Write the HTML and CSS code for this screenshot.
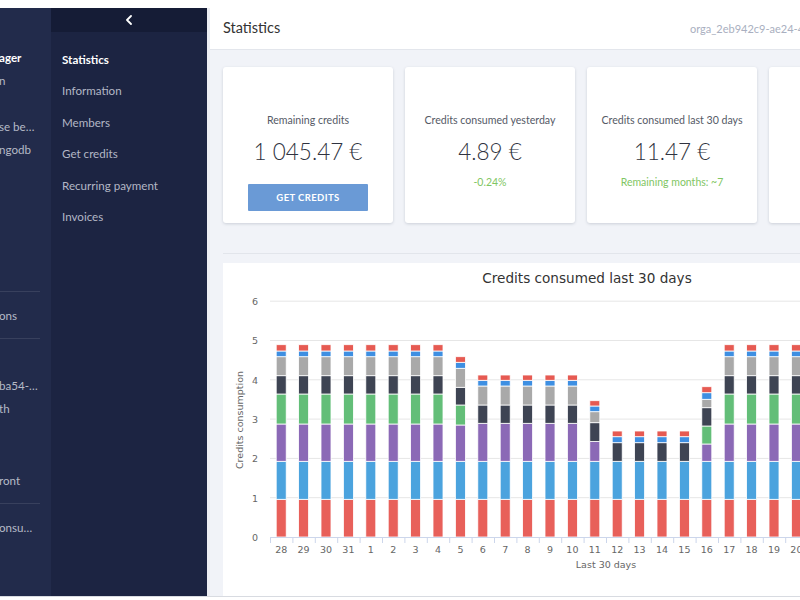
FILE: index.html
```html
<!DOCTYPE html>
<html lang="en">
<head>
<meta charset="utf-8">
<title>Statistics</title>
<link rel="stylesheet" href="styles.css">
</head>
<body>
<div class="frame">
  <aside class="side1">
    <div class="s1-group s1-first">
      <div class="s1-item s1-active">ager</div>
      <div class="s1-item">n</div>
      <div class="s1-item s1-gap">se be…</div>
      <div class="s1-item">ngodb</div>
    </div>
    <div class="s1-group s1-mid">
      <div class="s1-item">ons</div>
    </div>
    <div class="s1-group s1-apps">
      <div class="s1-item">ba54-…</div>
      <div class="s1-item">th</div>
      <div class="s1-item s1-gap2">ront</div>
    </div>
    <div class="s1-group s1-last">
      <div class="s1-item">onsu…</div>
    </div>
  </aside>

  <aside class="side2">
    <div class="side2-head">
      <svg class="chev" width="8" height="10" viewBox="0 0 8 10"><path d="M6 1 L2 5 L6 9" fill="none" stroke="#fff" stroke-width="1.8" stroke-linecap="round" stroke-linejoin="round"/></svg>
    </div>
    <nav class="side2-nav">
      <a class="s2-item s2-active">Statistics</a>
      <a class="s2-item">Information</a>
      <a class="s2-item">Members</a>
      <a class="s2-item">Get credits</a>
      <a class="s2-item">Recurring payment</a>
      <a class="s2-item">Invoices</a>
    </nav>
  </aside>

  <main class="main">
    <header class="topbar">
      <h1 class="topbar-title">Statistics</h1>
      <span class="org-id">orga_2eb942c9-ae24-4</span>
    </header>
    <div class="content">
      <div class="cards">
        <div class="card">
          <div class="card-label">Remaining credits</div>
          <div class="card-value">1 045.47 €</div>
          <button class="btn">GET CREDITS</button>
        </div>
        <div class="card">
          <div class="card-label">Credits consumed yesterday</div>
          <div class="card-value">4.89 €</div>
          <div class="card-note">-0.24%</div>
        </div>
        <div class="card">
          <div class="card-label">Credits consumed last 30 days</div>
          <div class="card-value">11.47 €</div>
          <div class="card-note">Remaining months: ~7</div>
        </div>
        <div class="card"></div>
      </div>
      <div class="section">
        <div class="chart-card">
          <svg class="chart" width="740" height="334" viewBox="0 0 740 334">
            <defs>
              <g id="barA" class="bar">
                <rect width="10" y="236.3" height="37.7" class="k-red"/>
                <rect width="10" y="198.3" height="38" class="k-blue"/>
                <rect width="10" y="161" height="37.3" class="k-purple"/>
                <rect width="10" y="131" height="30" class="k-green"/>
                <rect width="10" y="112.7" height="18.3" class="k-dark"/>
                <rect width="10" y="93.7" height="19" class="k-gray"/>
                <rect width="10" y="88" height="5.7" class="k-blue2"/>
                <rect width="10" y="81.7" height="6.3" class="k-red2"/>
              </g>
              <g id="barF" class="bar">
                <rect width="10" y="236.3" height="37.7" class="k-red"/>
                <rect width="10" y="198.3" height="38" class="k-blue"/>
                <rect width="10" y="162" height="36.3" class="k-purple"/>
                <rect width="10" y="142" height="20" class="k-green"/>
                <rect width="10" y="124.3" height="17.7" class="k-dark"/>
                <rect width="10" y="105.3" height="19" class="k-gray"/>
                <rect width="10" y="99.3" height="6" class="k-blue2"/>
                <rect width="10" y="93.7" height="5.6" class="k-red2"/>
              </g>
              <g id="barB" class="bar">
                <rect width="10" y="236.3" height="37.7" class="k-red"/>
                <rect width="10" y="198.3" height="38" class="k-blue"/>
                <rect width="10" y="160.3" height="38" class="k-purple"/>
                <rect width="10" y="142" height="18.3" class="k-dark"/>
                <rect width="10" y="123" height="19" class="k-gray"/>
                <rect width="10" y="117.3" height="5.7" class="k-blue2"/>
                <rect width="10" y="112" height="5.3" class="k-red2"/>
              </g>
              <g id="barD" class="bar">
                <rect width="10" y="236.3" height="37.7" class="k-red"/>
                <rect width="10" y="198.3" height="38" class="k-blue"/>
                <rect width="10" y="178.5" height="19.8" class="k-purple"/>
                <rect width="10" y="159.7" height="18.8" class="k-dark"/>
                <rect width="10" y="148.7" height="11" class="k-gray"/>
                <rect width="10" y="143" height="5.7" class="k-blue2"/>
                <rect width="10" y="137.7" height="5.3" class="k-red2"/>
              </g>
              <g id="barC" class="bar">
                <rect width="10" y="236.3" height="37.7" class="k-red"/>
                <rect width="10" y="198.3" height="38" class="k-blue"/>
                <rect width="10" y="179.7" height="18.6" class="k-dark"/>
                <rect width="10" y="173.7" height="6" class="k-blue2"/>
                <rect width="10" y="168" height="5.7" class="k-red2"/>
              </g>
              <g id="barE" class="bar">
                <rect width="10" y="236.3" height="37.7" class="k-red"/>
                <rect width="10" y="198.3" height="38" class="k-blue"/>
                <rect width="10" y="181" height="17.3" class="k-purple"/>
                <rect width="10" y="163" height="18" class="k-green"/>
                <rect width="10" y="144.7" height="18.3" class="k-dark"/>
                <rect width="10" y="136.3" height="8.4" class="k-gray"/>
                <rect width="10" y="129.7" height="6.6" class="k-blue2"/>
                <rect width="10" y="123.7" height="6" class="k-red2"/>
              </g>
            </defs>
            <text class="ch-title" x="364" y="20" text-anchor="middle">Credits consumed last 30 days</text>
            <g class="grid">
              <line x1="47" x2="740" y1="38.2" y2="38.2"/>
              <line x1="47" x2="740" y1="77.5" y2="77.5"/>
              <line x1="47" x2="740" y1="116.8" y2="116.8"/>
              <line x1="47" x2="740" y1="156.1" y2="156.1"/>
              <line x1="47" x2="740" y1="195.4" y2="195.4"/>
              <line x1="47" x2="740" y1="234.7" y2="234.7"/>
            </g>
            <g class="ylab" text-anchor="end">
              <text x="35" y="42">6</text>
              <text x="35" y="81.3">5</text>
              <text x="35" y="120.6">4</text>
              <text x="35" y="159.9">3</text>
              <text x="35" y="199.2">2</text>
              <text x="35" y="238.5">1</text>
              <text x="35" y="277.8">0</text>
            </g>
            <text class="axtitle" transform="translate(20 157) rotate(-90)" text-anchor="middle">Credits consumption</text>
            <use href="#barA" x="53.2"/>
            <use href="#barA" x="75.6"/>
            <use href="#barA" x="98"/>
            <use href="#barA" x="120.4"/>
            <use href="#barA" x="142.8"/>
            <use href="#barA" x="165.2"/>
            <use href="#barA" x="187.6"/>
            <use href="#barA" x="210"/>
            <use href="#barF" x="232.4"/>
            <use href="#barB" x="254.8"/>
            <use href="#barB" x="277.2"/>
            <use href="#barB" x="299.6"/>
            <use href="#barB" x="322"/>
            <use href="#barB" x="344.4"/>
            <use href="#barD" x="366.8"/>
            <use href="#barC" x="389.2"/>
            <use href="#barC" x="411.6"/>
            <use href="#barC" x="434"/>
            <use href="#barC" x="456.4"/>
            <use href="#barE" x="478.8"/>
            <use href="#barA" x="501.2"/>
            <use href="#barA" x="523.6"/>
            <use href="#barA" x="546"/>
            <use href="#barA" x="568.4"/>
            <line class="xaxis" x1="47" x2="740" y1="274.5" y2="274.5"/>
            <path class="ticks" d="M47.5 274v6M69.9 274v6M92.3 274v6M114.7 274v6M137.1 274v6M159.5 274v6M181.9 274v6M204.3 274v6M226.7 274v6M249.1 274v6M271.5 274v6M293.9 274v6M316.3 274v6M338.7 274v6M361.1 274v6M383.5 274v6M405.9 274v6M428.3 274v6M450.7 274v6M473.1 274v6M495.5 274v6M517.9 274v6M540.3 274v6M562.7 274v6M585.1 274v6"/>
            <g class="xlab" text-anchor="middle">
              <text x="58.2" y="290">28</text>
              <text x="80.6" y="290">29</text>
              <text x="103" y="290">30</text>
              <text x="125.4" y="290">31</text>
              <text x="147.8" y="290">1</text>
              <text x="170.2" y="290">2</text>
              <text x="192.6" y="290">3</text>
              <text x="215" y="290">4</text>
              <text x="237.4" y="290">5</text>
              <text x="259.8" y="290">6</text>
              <text x="282.2" y="290">7</text>
              <text x="304.6" y="290">8</text>
              <text x="327" y="290">9</text>
              <text x="349.4" y="290">10</text>
              <text x="371.8" y="290">11</text>
              <text x="394.2" y="290">12</text>
              <text x="416.6" y="290">13</text>
              <text x="439" y="290">14</text>
              <text x="461.4" y="290">15</text>
              <text x="483.8" y="290">16</text>
              <text x="506.2" y="290">17</text>
              <text x="528.6" y="290">18</text>
              <text x="551" y="290">19</text>
              <text x="573.4" y="290">20</text>
            </g>
            <text class="axtitle" x="383" y="305" text-anchor="middle">Last 30 days</text>
          </svg>
        </div>
      </div>
    </div>
  </main>
</div>
</body>
</html>
```

FILE: styles.css
```css
* { box-sizing: border-box; margin: 0; padding: 0; }

html, body {
  width: 800px;
  height: 600px;
  overflow: hidden;
  background: #ffffff;
}

body {
  font-family: Lato, "Liberation Sans", Arial, sans-serif;
  color: #333;
}

.frame {
  margin-top: 8px;
  height: 589px;
  display: flex;
  overflow: hidden;
  border-bottom: 1px solid #d8dbe1;
}

/* first sidebar (scrolled, only its right edge is visible) */
.side1 {
  width: 51px;
  flex: none;
  background: #222b4b;
  overflow: hidden;
  white-space: nowrap;
  font-size: 11.6px;
  color: #b6bac7;
}

.s1-group {
  margin-right: 11px;
  border-bottom: 1px solid rgba(255, 255, 255, 0.1);
  padding: 11.5px 0;
}

.s1-first { height: 284px; padding-top: 37.5px; }
.s1-apps { padding-top: 34.5px; }
.s1-last { border-bottom: 0; }

.s1-item {
  height: 23px;
  line-height: 23px;
  margin-left: -1px;
}

.s1-active { color: #fff; font-weight: 700; }
.s1-gap { margin-top: 23px; }
.s1-gap2 { margin-top: 49px; }

/* second sidebar */
.side2 {
  width: 156px;
  flex: none;
  background: #1c2442;
}

.side2-head {
  height: 24px;
  background: #151c36;
  display: flex;
  align-items: center;
  justify-content: center;
}

.chev { display: block; margin-top: -1px; }

.side2-nav {
  display: flex;
  flex-direction: column;
  padding-top: 12px;
}

.s2-item {
  display: block;
  padding-left: 11px;
  height: 31.4px;
  line-height: 31.4px;
  font-size: 11.6px;
  color: #b3b7c5;
  white-space: nowrap;
}

.s2-active { color: #fff; font-weight: 700; }

/* main area */
.main {
  flex: 1;
  min-width: 0;
  background: #f1f3f8;
  overflow: hidden;
  border-left: 3px solid #eceef3;
}

.topbar {
  width: 1000px;
  height: 42px;
  background: #fff;
  border-bottom: 1px solid #e3e6ec;
  display: flex;
  align-items: center;
  padding-left: 13px;
}

.topbar-title {
  width: 467px;
  flex: none;
  font-size: 14.5px;
  font-weight: 400;
  color: #333;
  margin-top: -2px;
}

.org-id {
  font-size: 11px;
  color: #a9afc0;
  white-space: nowrap;
}

.content {
  width: 1000px;
  padding: 17px 0 0 13px;
}

.cards {
  display: flex;
  gap: 12px;
}

.card {
  width: 170px;
  height: 156px;
  flex: none;
  background: #fff;
  border-radius: 3px;
  box-shadow: 0 1px 3px rgba(40, 50, 80, 0.18);
  display: flex;
  flex-direction: column;
  align-items: center;
  padding-top: 45px;
}

.card-label {
  font-size: 10.6px;
  color: #555a66;
  line-height: 16px;
}

.card-value {
  font-size: 22.5px;
  font-weight: 300;
  color: #2f3340;
  line-height: 30px;
  margin-top: 9px;
}

.card-note {
  font-size: 10.5px;
  color: #7fc663;
  line-height: 14px;
  margin-top: 8px;
}

.btn {
  margin-top: 17px;
  width: 120px;
  height: 27px;
  border: 0;
  border-radius: 1px;
  background: #6a9ad6;
  color: #fff;
  font-family: Lato, "Liberation Sans", Arial, sans-serif;
  font-size: 9.5px;
  font-weight: 700;
  letter-spacing: 0.4px;
}

.section {
  margin-top: 30px;
  border-top: 1px solid #e2e5eb;
  padding-top: 9px;
}

.chart-card {
  background: #fff;
  height: 340px;
  overflow: hidden;
}

.chart { display: block; font-family: "DejaVu Sans", Verdana, sans-serif; }

.ch-title { font-size: 13.6px; fill: #333; }
.grid line { stroke: #e6e6e6; stroke-width: 1; }
.ylab text, .xlab text { font-size: 9.5px; fill: #666; }
.axtitle { font-size: 9.5px; fill: #666; }
.xaxis { stroke: #ccd6eb; stroke-width: 1; }
.ticks { stroke: #ccd6eb; stroke-width: 1; fill: none; }

.bar rect { stroke: #fff; stroke-width: 0.8; }
.k-red { fill: #e8605a; }
.k-blue { fill: #4ba3de; }
.k-purple { fill: #8b69b6; }
.k-green { fill: #63be78; }
.k-dark { fill: #3e4453; }
.k-gray { fill: #a9a9a9; }
.k-blue2 { fill: #3e8fe2; }
.k-red2 { fill: #e65a52; }
```
